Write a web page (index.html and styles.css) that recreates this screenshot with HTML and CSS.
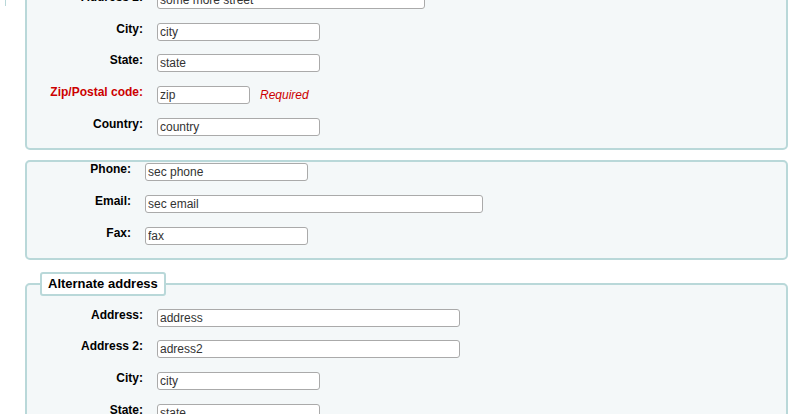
FILE: index.html
```html
<!DOCTYPE html>
<html>
<head>
    <title>Patron details</title>
    <meta charset="UTF-8">
    <meta name="viewport" content="width=device-width, initial-scale=1.0">
    <link rel="stylesheet" href="styles.css">
</head>
<body>
    <div class="page">
        <div class="page-edge"></div>

        <div class="content">
            <fieldset class="rows first">
                <ol>
                    <li class="row">
                        <label for="address2">Address 2:</label>
                        <input type="text" id="address2" class="input-mid" value="some more street">
                    </li>
                    <li class="row">
                        <label for="city">City:</label>
                        <input type="text" id="city" class="input-short" value="city">
                    </li>
                    <li class="row">
                        <label for="state">State:</label>
                        <input type="text" id="state" class="input-short" value="state">
                    </li>
                    <li class="row">
                        <label for="zipcode" class="required-label">Zip/Postal code:</label>
                        <input type="text" id="zipcode" class="input-zip" value="zip">
                        <span class="required-note">Required</span>
                    </li>
                    <li class="row">
                        <label for="country">Country:</label>
                        <input type="text" id="country" class="input-short" value="country">
                    </li>
                </ol>
            </fieldset>

            <fieldset class="rows rows-narrow">
                <ol>
                    <li class="row">
                        <label for="phone">Phone:</label>
                        <input type="text" id="phone" class="input-short" value="sec phone">
                    </li>
                    <li class="row">
                        <label for="email">Email:</label>
                        <input type="text" id="email" class="input-wide" value="sec email">
                    </li>
                    <li class="row">
                        <label for="fax">Fax:</label>
                        <input type="text" id="fax" class="input-short" value="fax">
                    </li>
                </ol>
            </fieldset>

            <fieldset class="rows has-legend">
                <legend>Alternate address</legend>
                <ol>
                    <li class="row">
                        <label for="b_address">Address:</label>
                        <input type="text" id="b_address" class="input-long" value="address">
                    </li>
                    <li class="row">
                        <label for="b_address2">Address 2:</label>
                        <input type="text" id="b_address2" class="input-long" value="adress2">
                    </li>
                    <li class="row">
                        <label for="b_city">City:</label>
                        <input type="text" id="b_city" class="input-short" value="city">
                    </li>
                    <li class="row">
                        <label for="b_state">State:</label>
                        <input type="text" id="b_state" class="input-short" value="state">
                    </li>
                </ol>
            </fieldset>
        </div>
    </div>
</body>
</html>
```

FILE: styles.css
```css
* {
    box-sizing: border-box;
}

body {
    margin: 0;
    font-family: "Liberation Sans", Arial, sans-serif;
    font-size: 12px;
    color: #000;
    background: #fff;
}

.page {
    display: flex;
    align-items: flex-start;
}

.page-edge {
    width: 1px;
    height: 6px;
    margin-left: 5px;
    background: #b9d8d9;
}

.content {
    flex: 1;
    margin: 0 5px 0 19px;
}

fieldset.rows {
    min-width: 0;
    margin: 0 0 10px;
    padding: 0 13px;
    border: 2px solid #b9d8d9;
    border-radius: 5px;
    background: #f4f8f9;
}

fieldset.first {
    margin-top: -12px;
}

fieldset.has-legend {
    margin-top: 12px;
    padding-top: 12px;
}

fieldset.rows legend {
    padding: 2px 6px;
    border: 2px solid #b9d8d9;
    border-radius: 3px;
    background: #fff;
    font-size: 13px;
    font-weight: bold;
    line-height: 16px;
}

fieldset.rows ol {
    list-style: none;
    margin: 0;
    padding: 0;
}

.row {
    display: flex;
    align-items: flex-start;
    height: 31.7px;
}

.row label {
    flex-shrink: 0;
    width: 103px;
    margin-right: 14px;
    text-align: right;
    font-weight: bold;
    line-height: 14px;
}

.rows-narrow .row label {
    width: 91px;
}

.row input {
    height: 18px;
    margin-top: 1px;
    padding: 0 2px;
    border: 1px solid #aaa;
    border-radius: 3px;
    background: #fff;
    color: #333;
    font-family: "Liberation Sans", Arial, sans-serif;
    font-size: 12px;
}

.input-short { width: 163px; }
.input-zip { width: 93px; }
.input-mid { width: 268px; }
.input-long { width: 303px; }
.input-wide { width: 338px; }

.row label.required-label {
    color: #cc0000;
}

.required-note {
    margin: 1px 0 0 10px;
    line-height: 18px;
    font-style: italic;
    color: #cc0000;
}
```
